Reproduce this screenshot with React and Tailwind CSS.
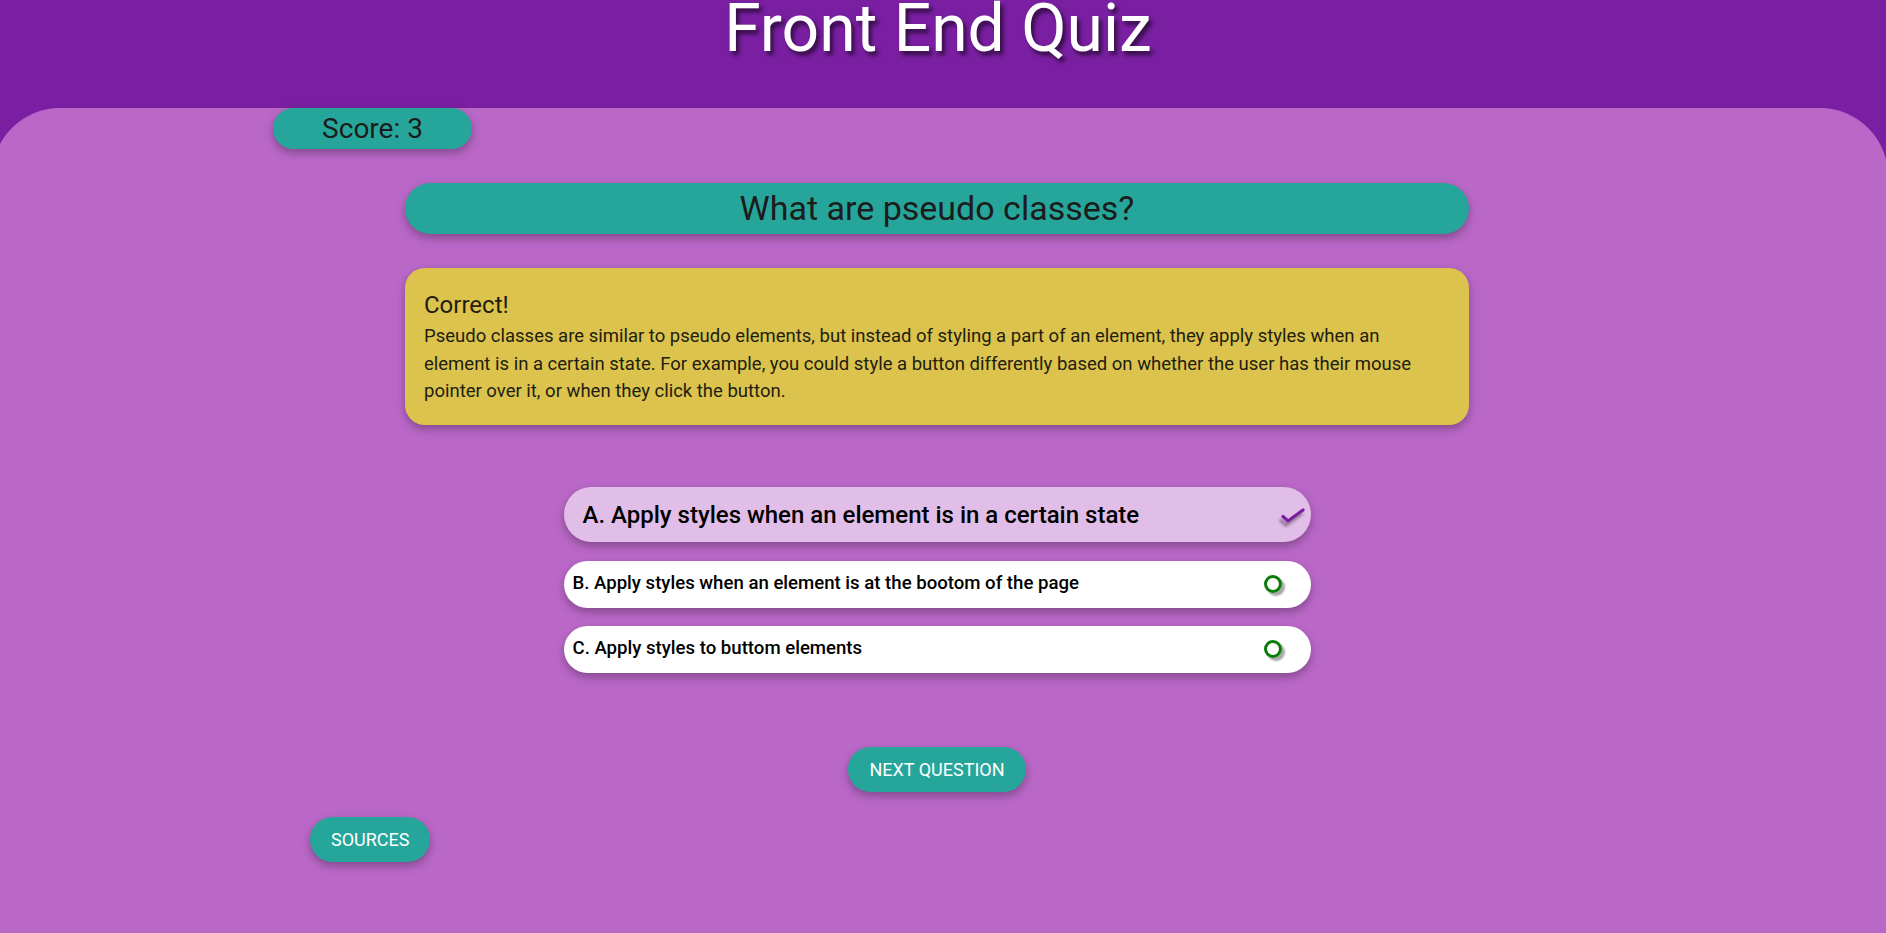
import React from "react";

const answers = [
  { key: "B", text: "B. Apply styles when an element is at the bootom of the page" },
  { key: "C", text: "C. Apply styles to buttom elements" },
];

function Ring() {
  return (
    <span className="block w-[18px] h-[18px] rounded-full border-[3px] border-[#067c06] shadow-[3px_3px_2px_rgba(0,0,0,0.35)]" />
  );
}

function Check() {
  return (
    <svg width="26" height="20" viewBox="0 0 26 20" className="[filter:drop-shadow(-2px_4px_1.5px_rgba(0,0,0,0.4))]">
      <path d="M3 11.5 L8 16 L23 5" fill="none" stroke="#7b1fa2" strokeWidth="3.2" strokeLinecap="round" strokeLinejoin="round" />
    </svg>
  );
}

export default function App() {
  return (
    <div className="min-h-screen w-full overflow-hidden bg-[#7a1fa2] font-['Roboto',sans-serif]">
      <header className="h-[108px] flex justify-center">
        <h1 className="-mt-[4px] ml-[-10px] text-[66px] leading-none text-white [text-shadow:3px_4px_4px_rgba(0,0,0,0.6)]">
          Front End Quiz
        </h1>
      </header>

      <main className="-ml-2 w-[calc(100%+10px)] min-h-[825px] bg-[#ba68c8] rounded-t-[68px] pb-10">
        <div className="pl-[281px]">
          <div className="w-[199px] h-[41px] flex items-center justify-center rounded-full bg-[#26a69a] text-[28px] text-[#1c1c1c] shadow-[0_4px_10px_rgba(0,0,0,0.3)]">
            Score: 3
          </div>
        </div>

        <div className="flex flex-col items-center pr-[6px]">
          <div className="mt-[34px] w-[1064px] h-[51px] flex items-center justify-center rounded-full bg-[#26a69a] text-[34px] text-[#1c1c1c] shadow-[0_4px_10px_rgba(0,0,0,0.3)]">
            What are pseudo classes?
          </div>

          <div className="mt-[34px] w-[1064px] rounded-[20px] bg-[#dbc34e] pl-[19px] pr-[20px] pt-[22px] pb-[19px] text-[#221d10] shadow-[0_4px_10px_rgba(0,0,0,0.3)]">
            <p className="text-[24px] leading-[30px]">Correct!</p>
            <p className="mt-[3px] text-[18.5px] leading-[27.6px]">
              Pseudo classes are similar to pseudo elements, but instead of styling a part of an element, they apply styles when an element is in a certain state. For example, you could style a button differently based on whether the user has their mouse pointer over it, or when they click the button.
            </p>
          </div>

          <div className="mt-[62px] w-[747px] flex flex-col gap-[18px]">
            <div className="mb-[1px] h-[55px] flex items-center justify-between rounded-full bg-[#e1bee7] pl-[19px] pr-[5px] pt-[2px] shadow-[0_4px_10px_rgba(0,0,0,0.3)]">
              <span className="text-[24px] font-medium text-black">A. Apply styles when an element is in a certain state</span>
              <Check />
            </div>
            {answers.map((a) => (
              <div
                key={a.key}
                className="h-[47px] flex items-center justify-between rounded-full bg-white pl-[9px] pr-[29px] shadow-[0_4px_10px_rgba(0,0,0,0.3)]"
              >
                <span className="text-[18.6px] font-medium text-black">{a.text}</span>
                <Ring />
              </div>
            ))}
          </div>

          <button className="mt-[74px] h-[45px] px-[21px] rounded-full bg-[#26a69a] text-[18px] text-white shadow-[0_4px_10px_rgba(0,0,0,0.3)]">
            NEXT QUESTION
          </button>
        </div>

        <div className="pl-[318px] mt-[25px]">
          <button className="h-[45px] px-[21px] rounded-full bg-[#26a69a] text-[18px] text-white shadow-[0_4px_10px_rgba(0,0,0,0.3)]">
            SOURCES
          </button>
        </div>
      </main>
    </div>
  );
}
